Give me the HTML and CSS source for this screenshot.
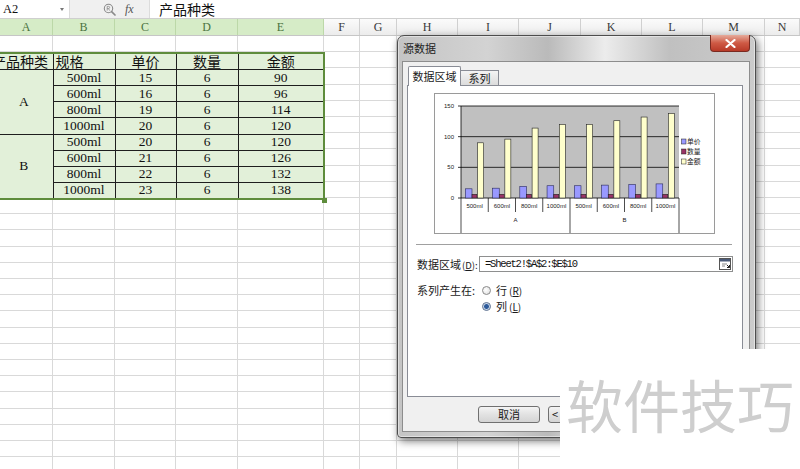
FILE: index.html
```html
<!DOCTYPE html>
<html lang="zh-CN">
<head>
<meta charset="utf-8">
<title>源数据</title>
<link rel="stylesheet" href="styles.css">
</head>
<body>
<div class="app">
  <div class="formula-bar">
    <div class="name-box"><span class="cell-ref">A2</span><span class="dd"></span></div>
    <div class="tools">
      <svg class="zoom-icon" width="13" height="13" viewBox="0 0 13 13"><circle cx="5.5" cy="5.5" r="4.2" fill="none" stroke="#8a8a8a" stroke-width="1.1"/><path d="M8.6 8.6 L12 12" stroke="#8a8a8a" stroke-width="1.7" stroke-linecap="round"/><path d="M4.2 3.4v4.2M4.2 3.4h1.4a1 1 0 0 1 0 2.1H4.2M5.4 5.5l1.3 2.1" fill="none" stroke="#8a8a8a" stroke-width=".8"/></svg>
      <span class="fx">fx</span>
    </div>
    <div class="formula-input">产品种类</div>
  </div>
  <div class="col-headers">
    <div class="ch sel w-a">A</div>
    <div class="ch sel w-b">B</div>
    <div class="ch sel w-c">C</div>
    <div class="ch sel w-d">D</div>
    <div class="ch sel w-e">E</div>
    <div class="ch w-f">F</div>
    <div class="ch w-g">G</div>
    <div class="ch w-h">H</div>
    <div class="ch w-i">I</div>
    <div class="ch w-j">J</div>
    <div class="ch w-k">K</div>
    <div class="ch w-l">L</div>
    <div class="ch w-m">M</div>
    <div class="ch w-n">N</div>
  </div>
  <div class="sheet">
    <div class="range">
      <table class="data">
        <colgroup><col class="w-a"><col class="w-b"><col class="w-c"><col class="w-d"><col class="w-e"></colgroup>
        <tr class="head"><td><span class="overflow">产品种类</span></td><td class="left">规格</td><td>单价</td><td>数量</td><td>金额</td></tr>
        <tr><td rowspan="4" class="grp">A</td><td>500ml</td><td>15</td><td>6</td><td>90</td></tr>
        <tr><td>600ml</td><td>16</td><td>6</td><td>96</td></tr>
        <tr><td>800ml</td><td>19</td><td>6</td><td>114</td></tr>
        <tr><td>1000ml</td><td>20</td><td>6</td><td>120</td></tr>
        <tr><td rowspan="4" class="grp">B</td><td>500ml</td><td>20</td><td>6</td><td>120</td></tr>
        <tr><td>600ml</td><td>21</td><td>6</td><td>126</td></tr>
        <tr><td>800ml</td><td>22</td><td>6</td><td>132</td></tr>
        <tr><td>1000ml</td><td>23</td><td>6</td><td>138</td></tr>
      </table>
    </div>
  </div>
</div>

<div class="dialog">
  <div class="titlebar">
    <span class="title">源数据</span>
    <span class="close"><svg width="11" height="9" viewBox="0 0 11 9"><path d="M1.5 1 L9.5 8 M9.5 1 L1.5 8" stroke="#fff" stroke-width="2.2" stroke-linecap="round"/></svg></span>
  </div>
  <div class="client">
    <div class="tabs">
      <div class="tab active">数据区域</div>
      <div class="tab inactive">系列</div>
    </div>
    <div class="tab-page">
      <div class="chart-frame">
        <svg class="chart" width="279" height="139" viewBox="0 0 279 139">
          <rect x="26" y="12" width="218" height="92" fill="#c0c0c0"/>
          <g stroke="#000" stroke-width=".8">
            <line x1="26" y1="12" x2="244" y2="12"/>
            <line x1="26" y1="42.67" x2="244" y2="42.67"/>
            <line x1="26" y1="73.33" x2="244" y2="73.33"/>
            <line x1="26" y1="104" x2="244" y2="104"/>
            <line x1="26" y1="12" x2="26" y2="104"/>
            <line x1="23" y1="12" x2="26" y2="12"/>
            <line x1="23" y1="42.67" x2="26" y2="42.67"/>
            <line x1="23" y1="73.33" x2="26" y2="73.33"/>
            <line x1="23" y1="104" x2="26" y2="104"/>
          </g>
          <g font-family="Liberation Sans, sans-serif" font-size="6" fill="#222" text-anchor="end">
            <text x="19" y="14">150</text>
            <text x="19" y="44.7">100</text>
            <text x="19" y="75.3">50</text>
            <text x="19" y="106">0</text>
          </g>
          <g stroke="#2a2a5a" stroke-width=".6" fill="#9999ff">
            <rect x="30.3" y="94.8" width="6.7" height="9.2"/>
            <rect x="57.55" y="94.19" width="6.7" height="9.81"/>
            <rect x="84.8" y="92.35" width="6.7" height="11.65"/>
            <rect x="112.05" y="91.73" width="6.7" height="12.27"/>
            <rect x="139.3" y="91.73" width="6.7" height="12.27"/>
            <rect x="166.55" y="91.12" width="6.7" height="12.88"/>
            <rect x="193.8" y="90.51" width="6.7" height="13.49"/>
            <rect x="221.05" y="89.89" width="6.7" height="14.11"/>
          </g>
          <g stroke="#222" stroke-width=".6" fill="#993366">
            <rect x="37" y="100.32" width="5" height="3.68"/>
            <rect x="64.25" y="100.32" width="5" height="3.68"/>
            <rect x="91.5" y="100.32" width="5" height="3.68"/>
            <rect x="118.75" y="100.32" width="5" height="3.68"/>
            <rect x="146" y="100.32" width="5" height="3.68"/>
            <rect x="173.25" y="100.32" width="5" height="3.68"/>
            <rect x="200.5" y="100.32" width="5" height="3.68"/>
            <rect x="227.75" y="100.32" width="5" height="3.68"/>
          </g>
          <g stroke="#222" stroke-width=".6" fill="#ffffcc">
            <rect x="42.6" y="48.8" width="6" height="55.2"/>
            <rect x="69.85" y="45.12" width="6" height="58.88"/>
            <rect x="97.1" y="34.08" width="6" height="69.92"/>
            <rect x="124.35" y="30.4" width="6" height="73.6"/>
            <rect x="151.6" y="30.4" width="6" height="73.6"/>
            <rect x="178.85" y="26.72" width="6" height="77.28"/>
            <rect x="206.1" y="23.04" width="6" height="80.96"/>
            <rect x="233.35" y="19.36" width="6" height="84.64"/>
          </g>
          <g stroke="#000" stroke-width=".7">
            <line x1="26" y1="104" x2="26" y2="139"/>
            <line x1="53.25" y1="104" x2="53.25" y2="118"/>
            <line x1="80.5" y1="104" x2="80.5" y2="118"/>
            <line x1="107.75" y1="104" x2="107.75" y2="118"/>
            <line x1="135" y1="104" x2="135" y2="139"/>
            <line x1="162.25" y1="104" x2="162.25" y2="118"/>
            <line x1="189.5" y1="104" x2="189.5" y2="118"/>
            <line x1="216.75" y1="104" x2="216.75" y2="118"/>
            <line x1="244" y1="104" x2="244" y2="139"/>
          </g>
          <g font-family="Liberation Sans, sans-serif" font-size="6" fill="#222" text-anchor="middle">
            <text x="39.6" y="114">500ml</text>
            <text x="66.9" y="114">600ml</text>
            <text x="94.1" y="114">800ml</text>
            <text x="121.4" y="114">1000ml</text>
            <text x="148.6" y="114">500ml</text>
            <text x="175.9" y="114">600ml</text>
            <text x="203.1" y="114">800ml</text>
            <text x="230.4" y="114">1000ml</text>
            <text x="80.5" y="128">A</text>
            <text x="189.5" y="128">B</text>
          </g>
          <g stroke="#222" stroke-width=".5">
            <rect x="246.5" y="45" width="4.5" height="5" fill="#9999ff"/>
            <rect x="246.5" y="55" width="4.5" height="5" fill="#993366"/>
            <rect x="246.5" y="65" width="4.5" height="5" fill="#ffffcc"/>
          </g>
          <g font-family="Noto Sans CJK SC, sans-serif" font-size="6.8" fill="#222">
            <text x="252" y="50.2">单价</text>
            <text x="252" y="60.2">数量</text>
            <text x="252" y="70.2">金额</text>
          </g>
        </svg>
      </div>
      <div class="sep"></div>
      <div class="field-row">
        <span class="label">数据区域<span class="key">(<u>D</u>):</span></span>
        <div class="ref-input">
          <span class="ref-text">=Sheet2!$A$2:$E$10</span>
          <span class="collapse-btn"><svg width="12" height="12" viewBox="0 0 12 12"><rect x=".5" y=".5" width="11" height="11" fill="#fff" stroke="#555"/><rect x="1" y="1" width="10" height="2.5" fill="#4a5a78"/><path d="M3 6h5M3 8h3" stroke="#888" stroke-width="1"/><path d="M8 7l2.5 2.5M10.5 7v2.5H8" fill="none" stroke="#222" stroke-width="1"/></svg></span>
        </div>
      </div>
      <div class="series-row">
        <span class="label">系列产生在:</span>
        <div class="radios">
          <div class="radio"><span class="dot"></span>行<span class="key">(<u>R</u>)</span></div>
          <div class="radio checked"><span class="dot"></span>列<span class="key">(<u>L</u>)</span></div>
        </div>
      </div>
    </div>
    <div class="buttons">
      <span class="btn">取消</span>
      <span class="btn btn-back">&lt;</span>
    </div>
  </div>
</div>

<div class="watermark"><span class="wm-text">软件技巧</span></div>
</body>
</html>
```

FILE: styles.css
```css
* { box-sizing: border-box; margin: 0; padding: 0; }
html, body { width: 800px; height: 469px; overflow: hidden; background: #fff; }
body { font-family: "Noto Sans CJK SC", "Liberation Sans", sans-serif; color: #111; }

.app { width: 800px; height: 469px; display: flex; flex-direction: column; }

/* formula bar */
.formula-bar { display: flex; height: 19px; border-bottom: 1px solid #cfcfcf; background: #fff; }
.name-box { width: 70px; display: flex; align-items: center; justify-content: space-between; padding: 0 5px 0 3px; font: 12.5px "Liberation Serif", serif; color: #111; border-right: 1px solid #dcdcdc; }
.dd { width: 0; height: 0; border-left: 2.5px solid transparent; border-right: 2.5px solid transparent; border-top: 3px solid #777; }
.tools { width: 80px; background: #f0f0f0; display: flex; align-items: center; gap: 9px; padding-left: 33px; border-right: 1px solid #dcdcdc; }
.fx { font: italic 12px "Liberation Serif", serif; color: #555; }
.formula-input { flex: 1; padding-left: 9px; font-size: 14px; line-height: 18px; color: #111; }

/* column headers */
.col-headers { display: flex; height: 17px; border-bottom: 1px solid #c6c6c6; background: linear-gradient(#fbfbfb, #ececec); }
.ch { height: 100%; border-right: 1px solid #d0d0d0; text-align: center; font: 12px/16px "Liberation Serif", serif; color: #3a3a3a; }
.ch.sel { background: #d6ecc7; color: #4a7340; border-right-color: #bcd8a8; }
.w-a { width: 53px; } .w-b { width: 62px; } .w-c { width: 61px; } .w-d { width: 62px; } .w-e { width: 86px; }
.w-f { width: 36px; } .w-g { width: 37px; } .w-h { width: 61px; } .w-i { width: 61px; } .w-j { width: 62px; }
.w-k { width: 61px; } .w-l { width: 61px; } .w-m { width: 62px; } .w-n { width: 35px; }

/* sheet grid */
.sheet {
  flex: 1;
  background-image:
    linear-gradient(to right,
      transparent 52px, #d9d9d9 52px 53px, transparent 53px 114px, #d9d9d9 114px 115px,
      transparent 115px 175px, #d9d9d9 175px 176px, transparent 176px 237px, #d9d9d9 237px 238px,
      transparent 238px 323px, #d9d9d9 323px 324px, transparent 324px 359px, #d9d9d9 359px 360px,
      transparent 360px 396px, #d9d9d9 396px 397px, transparent 397px 457px, #d9d9d9 457px 458px,
      transparent 458px 518px, #d9d9d9 518px 519px, transparent 519px 580px, #d9d9d9 580px 581px,
      transparent 581px 641px, #d9d9d9 641px 642px, transparent 642px 702px, #d9d9d9 702px 703px,
      transparent 703px 764px, #d9d9d9 764px 765px, transparent 765px),
    repeating-linear-gradient(to bottom, transparent 0 15.2px, #d9d9d9 15.2px 16.2px);
}
.range { position: relative; width: 324px; margin-top: 16px; }
.range::after { content: ""; position: absolute; right: -3px; bottom: -3px; width: 5px; height: 5px; background: #5e8c3c; }
.data { border-collapse: collapse; table-layout: fixed; width: 324px; border: 2px solid #5e8c3c; border-left: 0; background: #e2f0d9; }
.data td { border: 1px solid #1e1e1e; height: 16.15px; padding: 0; text-align: center; font: 13.5px/14px "Liberation Serif", serif; color: #111; white-space: nowrap; overflow: visible; }
.data tr td:first-child { border-left: 0; }
.data .head td { font: 14px/15px "Noto Sans CJK SC", sans-serif; }
.data td.left { text-align: left; padding-left: 2px; }
.data td.grp { padding-right: 5px; }
.overflow { display: block; margin-left: -8px; text-align: left; }

/* dialog */
.dialog {
  position: absolute; left: 397px; top: 35px; width: 359px; height: 403px;
  border: 1px solid #4d4d4d; border-radius: 7px 7px 4px 4px;
  background: linear-gradient(to right, #c4c4c4 0%, #d3d3d3 25%, #bababa 42%, #ececec 58%, #c0c0c0 76%, #cbcbcb 100%);
  box-shadow: 2px 3px 8px rgba(0,0,0,.55), inset 0 0 0 1px rgba(255,255,255,.45);
  display: flex; flex-direction: column; padding: 0 5px 5px 4px;
  font-size: 11px; color: #1a1a1a;
}
.titlebar { height: 25px; display: flex; justify-content: space-between; align-items: flex-start; }
.title { padding: 5px 0 0 1px; font-size: 11px; line-height: 14px; color: #222; }
.close { width: 40px; height: 17px; margin-top: -1px; border: 1px solid #7a2a20; border-top: none; border-radius: 0 0 4px 4px; background: linear-gradient(#e6ab9b, #cf5a45 50%, #b83a28); display: flex; align-items: center; justify-content: center; }
.client { flex: 1; border: 1px solid #8d8d8d; background: #f0f0f0; display: flex; flex-direction: column; }
.tabs { height: 23px; display: flex; align-items: flex-end; padding-left: 5px; }
.tab { text-align: center; font-size: 11px; border: 1px solid #898c95; border-bottom: none; }
.tab.active { position: relative; z-index: 1; width: 53px; height: 20px; margin-bottom: -1px; background: #fff; line-height: 18px; border-radius: 2px 2px 0 0; }
.tab.inactive { width: 38px; height: 15px; line-height: 14px; background: linear-gradient(#f4f4f4, #dcdcdc); border-left: none; }
.tab-page { margin-left: 4px; width: 336px; height: 312px; border: 1px solid #898c95; background: #fff; padding-top: 7px; }
.chart-frame { margin-left: 26px; width: 281px; height: 141px; border: 1px solid #9a9a9a; background: #fff; }
.chart { display: block; }
.sep { margin: 10px 0 0 8px; width: 316px; height: 2px; border-top: 1px solid #a0a0a0; border-bottom: 1px solid #fff; }
.field-row { margin-top: 10px; display: flex; align-items: center; height: 16px; padding-left: 9px; }
.label { width: 62px; flex: none; font-size: 11px; line-height: 14px; white-space: nowrap; }
.key { margin-left: 1px; font-size: 9.5px; }
.ref-input { width: 254px; height: 16px; border: 1px solid #8e8f8f; background: #fff; display: flex; align-items: center; justify-content: space-between; padding: 0 1px 0 5px; }
.ref-text { font: 10.5px "Liberation Mono", monospace; letter-spacing: -1.2px; color: #111; }
.collapse-btn { display: flex; }
.series-row { margin-top: 11px; display: flex; padding-left: 9px; }
.radios { display: flex; flex-direction: column; gap: 2px; padding-left: 3px; }
.radio { display: flex; align-items: center; height: 14px; font-size: 11px; }
.radio .key { margin-left: 2px; font-size: 10px; }
.dot { width: 9px; height: 9px; border-radius: 50%; border: 1px solid #8a8a8a; background: radial-gradient(circle at 40% 40%, #fff, #dcdcdc); margin-right: 5px; }
.radio.checked .dot { background: radial-gradient(circle, #2d5a9a 0 2px, #9fb8d8 2.6px, #e8eef6 3.4px); border-color: #5a6f8f; }
.buttons { margin-top: 9px; padding-left: 75px; display: flex; gap: 8px; }
.btn { width: 62px; height: 17px; flex: none; border: 1px solid #707070; border-radius: 3px; background: linear-gradient(#f4f4f4, #e2e2e2 50%, #d4d4d4); font-size: 11px; line-height: 15px; text-align: center; white-space: nowrap; }
.btn-back { text-align: left; padding-left: 3px; }

/* watermark */
.watermark { position: absolute; left: 560px; top: 349px; right: 0; bottom: 0; background: #fff; padding: 26px 0 0 6px; }
.wm-text { font-size: 57px; line-height: 1; color: #cecece; white-space: nowrap; }
```
